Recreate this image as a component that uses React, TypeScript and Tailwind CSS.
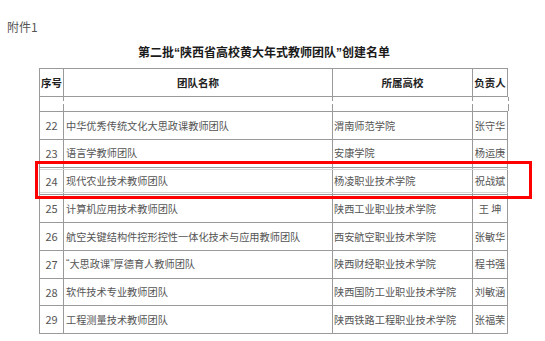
import React from "react";

type Row = { no: number; team: React.ReactNode; school: string; lead: string };

const Q = ({ c }: { c: string }) => <span className="font-['Liberation_Sans',sans-serif]">{c}</span>;

const rows: Row[] = [
  { no: 22, team: "中华优秀传统文化大思政课教师团队", school: "渭南师范学院", lead: "张守华" },
  { no: 23, team: "语言学教师团队", school: "安康学院", lead: "杨运庚" },
  { no: 24, team: "现代农业技术教师团队", school: "杨凌职业技术学院", lead: "祝战斌" },
  { no: 25, team: "计算机应用技术教师团队", school: "陕西工业职业技术学院", lead: "王 坤" },
  { no: 26, team: "航空关键结构件控形控性一体化技术与应用教师团队", school: "西安航空职业技术学院", lead: "张敏华" },
  {
    no: 27,
    team: (
      <>
        <Q c="“" />大思政课<Q c="”" />厚德育人教师团队
      </>
    ),
    school: "陕西财经职业技术学院",
    lead: "程书强",
  },
  { no: 28, team: "软件技术专业教师团队", school: "陕西国防工业职业技术学院", lead: "刘敏涵" },
  { no: 29, team: "工程测量技术教师团队", school: "陕西铁路工程职业技术学院", lead: "张福荣" },
];

const line = "border-[#9a9a9a]";

export default function App() {
  return (
    <div className="relative w-[545px] h-[341px] overflow-hidden bg-white font-['Noto_Sans_CJK_SC',sans-serif] text-[#333]">
      {/* 附件 */}
      <div className="pl-[7px] pt-[19px] text-[12px] leading-[16px] text-[#555]">附件1</div>

      {/* 标题 */}
      <div className="mt-[9px] w-[528px] text-center text-[12px] font-bold leading-[16px] text-[#1a1a1a]">
        第二批<Q c="“" />陕西省高校黄大年式教师团队<Q c="”" />创建名单
      </div>

      {/* 表格 */}
      <div className={`ml-[39px] mt-[7px] w-[469px] border-l border-t ${line}`}>
        <div className="flex h-[28px] text-[10.5px] font-bold text-[#222]">
          <div className={`flex w-[24px] items-center justify-center border-r border-b ${line}`}>序号</div>
          <div className={`flex w-[269px] items-center justify-center border-r border-b ${line}`}>团队名称</div>
          <div className={`flex w-[140px] items-center justify-center border-r border-b ${line}`}>所属高校</div>
          <div className={`flex w-[35px] items-center justify-center border-r border-b ${line}`}>负责人</div>
        </div>

        {/* 截断处的空行 */}
        <div className="flex h-[15px]">
          <div className={`w-[24px] border-b ${line}`} />
          {[269, 140].map((w) => (
            <div key={w} className={`relative border-b ${line} ${w === 269 ? "w-[269px]" : "w-[140px]"}`}>
              <div className="absolute left-[-1px] top-0 h-[4px] w-px bg-[#9a9a9a]" />
              <div className="absolute left-[-1px] bottom-0 h-[7px] w-px bg-[#9a9a9a]" />
            </div>
          ))}
          <div className={`relative w-[35px] border-b ${line}`}>
            <div className="absolute left-[-1px] top-0 h-[4px] w-px bg-[#9a9a9a]" />
            <div className="absolute left-[-1px] bottom-0 h-[7px] w-px bg-[#9a9a9a]" />
            <div className="absolute right-[-1px] top-0 h-[4px] w-px bg-[#9a9a9a]" />
            <div className="absolute right-[-1px] bottom-0 h-[7px] w-px bg-[#9a9a9a]" />
          </div>
        </div>

        {rows.map((r) => (
          <div key={r.no} className="relative flex h-[27.75px] text-[10.2px] text-[#555]">
            {r.no === 24 && (
              <>
                <div className="absolute left-0 right-0 top-[1px] h-px bg-[#d6d6d6]" />
                <div className="absolute left-0 right-0 bottom-[2px] h-px bg-[#d6d6d6]" />
              </>
            )}
            <div className={`flex w-[24px] items-center justify-center border-r border-b ${line} text-[11px]`}>
              {r.no}
            </div>
            <div className={`flex w-[269px] items-center border-r border-b ${line} pl-[2px]`}>{r.team}</div>
            <div className={`flex w-[140px] items-center border-r border-b ${line} pl-[1px]`}>{r.school}</div>
            <div className={`flex w-[35px] items-center justify-center whitespace-pre border-r border-b ${line}`}>
              {r.lead}
            </div>
          </div>
        ))}
      </div>

      {/* 红框标注 */}
      <div className="absolute left-[35px] top-[161px] h-[38px] w-[497px] border-[3px] border-[#ff0000]" />
    </div>
  );
}
